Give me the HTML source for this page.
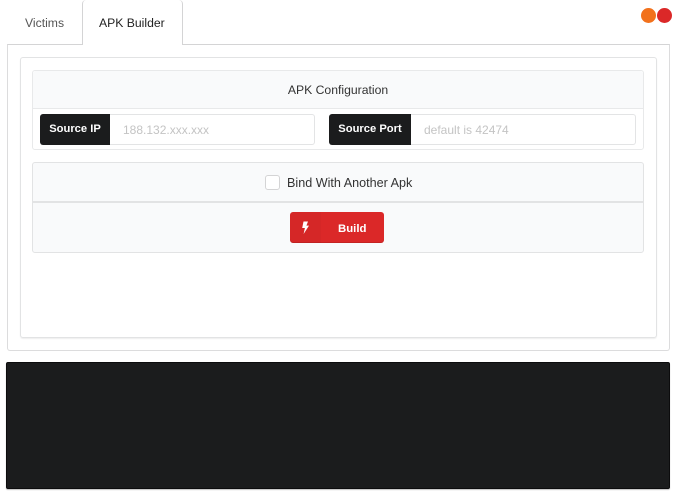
<!DOCTYPE html>
<html><head><meta charset="utf-8"><style>
html,body{margin:0;padding:0;background:#fff;}
body{width:677px;height:499px;position:relative;overflow:hidden;font-family:"Liberation Sans",sans-serif;color:#222;filter:blur(.3px);}
div{position:absolute;box-sizing:border-box;white-space:nowrap;}
.t{font-size:12.2px;line-height:16px;}
.lab{background:#1b1c1d;color:#fff;font-weight:bold;font-size:11.2px;line-height:31px;text-align:center;border-radius:3px 0 0 3px;top:114px;height:31px;}
.inp{background:#fff;border:1px solid #e3e4e5;border-left:none;border-radius:0 3px 3px 0;top:114px;height:31px;color:#c4c4c4;font-size:12px;line-height:30px;}
</style></head><body>
<div class="t" style="left:25px;top:15px;color:#555;">Victims</div>
<div style="left:7px;top:44px;width:663px;height:307px;border:1px solid #dcdcdd;border-top:1px solid #d4d4d5;border-radius:0 0 3px 3px;"></div>
<div style="left:82px;top:0;width:101px;height:45px;background:#fff;border:1px solid #d4d4d5;border-top:none;border-bottom:none;border-radius:4px 4px 0 0;"></div>
<div class="t" style="left:99px;top:15px;color:#222;">APK Builder</div>
<div style="left:641px;top:8px;width:15px;height:15px;border-radius:50%;background:#f2711c;"></div>
<div style="left:657px;top:8px;width:15px;height:15px;border-radius:50%;background:#db2828;"></div>

<div style="left:20px;top:57px;width:637px;height:281px;border:1px solid #e2e3e4;border-radius:3px;box-shadow:0 1px 1px rgba(34,36,38,.08);"></div>

<div style="left:32px;top:70px;width:612px;height:80px;border:1px solid #e8e9ea;border-radius:3px;background:#fff;"></div>
<div style="left:33px;top:71px;width:610px;height:38px;background:#f9fafb;border-bottom:1px solid #e8e9ea;border-radius:3px 3px 0 0;"></div>
<div class="t" style="left:33px;width:610px;top:82px;text-align:center;color:#333;">APK Configuration</div>
<div class="lab" style="left:40px;width:70px;">Source IP</div>
<div class="inp" style="left:110px;width:205px;padding-left:13px;border-left:none;">188.132.xxx.xxx</div>
<div class="lab" style="left:329px;width:82px;">Source Port</div>
<div class="inp" style="left:411px;width:225px;padding-left:13px;">default is 42474</div>

<div style="left:32px;top:162px;width:612px;height:91px;border:1px solid #e2e3e4;border-radius:3px;background:#f9fafb;"></div>
<div style="left:33px;top:201px;width:610px;height:2px;background:#e2e3e4;"></div>
<div style="left:265px;top:175px;width:15px;height:15px;background:#fff;border:1px solid #d4d4d5;border-radius:3px;"></div>
<div class="t" style="left:287px;top:175px;color:#333;font-size:12.6px;">Bind With Another Apk</div>

<div style="left:290px;top:212px;width:94px;height:31px;background:#db2828;border-radius:3px;box-shadow:inset 0 -1px 0 rgba(0,0,0,.1);"></div>
<div style="left:290px;top:212px;width:31px;height:31px;background:rgba(0,0,0,.025);border-radius:3px 0 0 3px;"></div>
<svg style="position:absolute;left:301px;top:221px;" width="9" height="14" viewBox="0 0 9 14"><path d="M2.5 0.5H7L5.4 4.6H8L2.6 13L3.9 7H1.2Z" fill="#fff"/></svg>
<div class="t" style="left:338px;top:220.5px;color:#fff;font-weight:bold;font-size:11.4px;">Build</div>

<div style="left:6px;top:362px;width:664px;height:127px;background:#1b1c1d;border:1px solid #0c0c0d;border-radius:2px;box-shadow:0 1px 1px rgba(0,0,0,.25);"></div>
</body></html>
